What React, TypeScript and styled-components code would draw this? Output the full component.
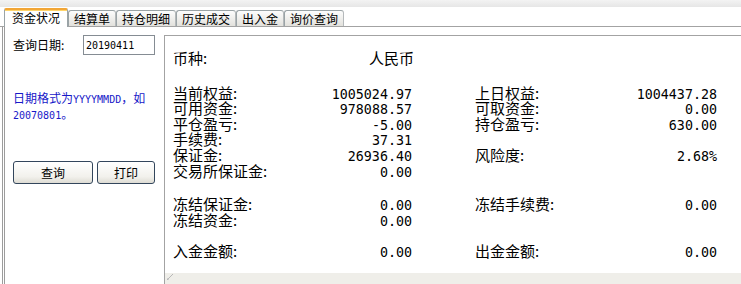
import React from 'react';
import styled, { createGlobalStyle } from 'styled-components';

const cjk = '"Noto Sans CJK SC", "Noto Sans", sans-serif';
const mono = '"DejaVu Sans Mono", "Liberation Mono", monospace';

// window chrome colours
const frameGray = '#a3a3a3';
const tabBorder = '#9aa3a6';

const GlobalStyle = createGlobalStyle`
  html, body {
    margin: 0;
    padding: 0;
    background: #ffffff;
  }
  body {
    font-family: ${cjk};
    width: 741px;
    height: 284px;
    overflow: hidden;
  }
`;

const Window = styled.div`
  width: 741px;
  height: 284px;
  display: flex;
  flex-direction: column;
`;

const TopStrip = styled.div`
  height: 7px;
  background: linear-gradient(#f3f3f3, #e6e6e6);
`;

const TabBar = styled.div`
  height: 19px;
  display: flex;
  align-items: flex-end;
  padding-left: 4px;
  border-bottom: 1px solid ${frameGray};
`;

const Tab = styled.div<{ $active?: boolean }>`
  box-sizing: border-box;
  display: flex;
  align-items: center;
  font-size: 12px;
  line-height: 14px;
  color: #000;
  border: 1px solid ${tabBorder};
  border-bottom: none;
  ${(p) =>
    p.$active
      ? `
    height: 19px;
    margin-bottom: -1px;
    padding: 0 7px 1px;
    background: #ffffff;
    border-top: 2px solid #f2a636;
    box-shadow: inset 0 1px 0 #ffd46a;
    border-radius: 2px 2px 0 0;
    position: relative;
    z-index: 1;
  `
      : `
    height: 16px;
    padding: 0 5px;
    background: linear-gradient(#fdfdfd, #e2e1dc);
    border-radius: 3px 3px 0 0;
    border-right-color: #b5b9bb;
  `}
`;

const Frame = styled.div`
  flex: 1;
  display: flex;
  margin-left: 2px;
  border-left: 3px double #9c9c9c;
`;

const Side = styled.div`
  width: 159px;
  padding: 8px 0 0 8px;
  box-sizing: border-box;
  display: flex;
  flex-direction: column;
`;

const QueryRow = styled.div`
  display: flex;
  align-items: center;
  height: 20px;
`;

const QueryLabel = styled.span`
  width: 70px;
  font-size: 12px;
  line-height: 14px;
  color: #000;
`;

const DateInput = styled.div`
  box-sizing: border-box;
  width: 72px;
  height: 20px;
  border: 1px solid #858c93;
  padding: 0 2px;
  display: flex;
  align-items: center;
  font-family: ${mono};
  font-size: 10px;
  color: #000;
`;

const Hint = styled.div`
  margin-top: 36px;
  width: 146px;
  font-size: 12px;
  line-height: 14px;
  color: #1818c8;
`;

const Half = styled.span`
  font-family: ${mono};
  font-size: 10px;
`;

const ButtonRow = styled.div`
  margin-top: 38px;
  display: flex;
  gap: 4px;
`;

const Button = styled.div<{ $w: number }>`
  box-sizing: border-box;
  width: ${(p) => p.$w}px;
  height: 23px;
  border: 1px solid #33465c;
  border-radius: 3px;
  background: linear-gradient(#ffffff, #f2f1ec 70%, #dedcd4);
  display: flex;
  align-items: center;
  justify-content: center;
  font-size: 12px;
  color: #000;
`;

const Main = styled.div`
  flex: 1;
  margin-top: 8px;
  border-top: 1px solid ${frameGray};
  border-left: 1px solid ${frameGray};
  display: flex;
  flex-direction: column;
`;

const Sheet = styled.div`
  flex: 1;
  padding: 14px 0 0 8px;
`;

const Section = styled.div<{ $gap: number }>`
  margin-top: ${(p) => p.$gap}px;
  display: grid;
  grid-template-columns: 239px 242px;
  column-gap: 63px;
  grid-auto-rows: 15.6px;
`;

const Field = styled.div`
  display: flex;
  justify-content: space-between;
  align-items: baseline;
  line-height: 15.6px;
  white-space: nowrap;
`;

const Label = styled.span`
  font-size: 15px;
  color: #000;
`;

const Value = styled.span<{ $cjk?: boolean }>`
  font-family: ${(p) => (p.$cjk ? cjk : mono)};
  font-size: ${(p) => (p.$cjk ? '15px' : '13.33px')};
  color: #000;
  ${(p) => (p.$cjk ? 'margin-right: -2px;' : '')}
`;

const StatusStrip = styled.div`
  height: 11px;
  background: #efeee9;
  display: flex;
  align-items: flex-start;
  padding-left: 1px;
`;

type Cell = [string, string] | null;

const sections: { gap: number; rows: [Cell, Cell][] }[] = [
  {
    gap: 19,
    rows: [
      [['当前权益:', '1005024.97'], ['上日权益:', '1004437.28']],
      [['可用资金:', '978088.57'], ['可取资金:', '0.00']],
      [['平仓盈亏:', '-5.00'], ['持仓盈亏:', '630.00']],
      [['手续费:', '37.31'], null],
      [['保证金:', '26936.40'], ['风险度:', '2.68%']],
      [['交易所保证金:', '0.00'], null],
    ],
  },
  {
    gap: 18,
    rows: [
      [['冻结保证金:', '0.00'], ['冻结手续费:', '0.00']],
      [['冻结资金:', '0.00'], null],
    ],
  },
  {
    gap: 16,
    rows: [[['入金金额:', '0.00'], ['出金金额:', '0.00']]],
  },
];

const tabs = ['资金状况', '结算单', '持仓明细', '历史成交', '出入金', '询价查询'];

function FieldCell({ cell }: { cell: Cell }) {
  if (!cell) return <div />;
  return (
    <Field>
      <Label>{cell[0]}</Label>
      <Value>{cell[1]}</Value>
    </Field>
  );
}

export default function App() {
  return (
    <Window>
      <GlobalStyle />
      <TopStrip />
      <TabBar>
        {tabs.map((t, i) => (
          <Tab key={t} $active={i === 0}>
            {t}
          </Tab>
        ))}
      </TabBar>
      <Frame>
        <Side>
          <QueryRow>
            <QueryLabel>查询日期:</QueryLabel>
            <DateInput>20190411</DateInput>
          </QueryRow>
          <Hint>
            日期格式为<Half>YYYYMMDD</Half>，如<Half>20070801</Half>。
          </Hint>
          <ButtonRow>
            <Button $w={80}>查询</Button>
            <Button $w={58}>打印</Button>
          </ButtonRow>
        </Side>
        <Main>
          <Sheet>
            <Section $gap={0}>
              <Field>
                <Label>币种:</Label>
                <Value $cjk>人民币</Value>
              </Field>
            </Section>
            {sections.map((s, si) => (
              <Section key={si} $gap={s.gap}>
                {s.rows.map((r, ri) => (
                  <React.Fragment key={ri}>
                    <FieldCell cell={r[0]} />
                    <FieldCell cell={r[1]} />
                  </React.Fragment>
                ))}
              </Section>
            ))}
          </Sheet>
          <StatusStrip>
            <svg width="8" height="8" viewBox="0 0 8 8">
              <path d="M1 7 L7 1" stroke="#b8b8b8" strokeWidth="1" />
              <path d="M1 5 L3 7" stroke="#d0d0d0" strokeWidth="1" />
            </svg>
          </StatusStrip>
        </Main>
      </Frame>
    </Window>
  );
}
